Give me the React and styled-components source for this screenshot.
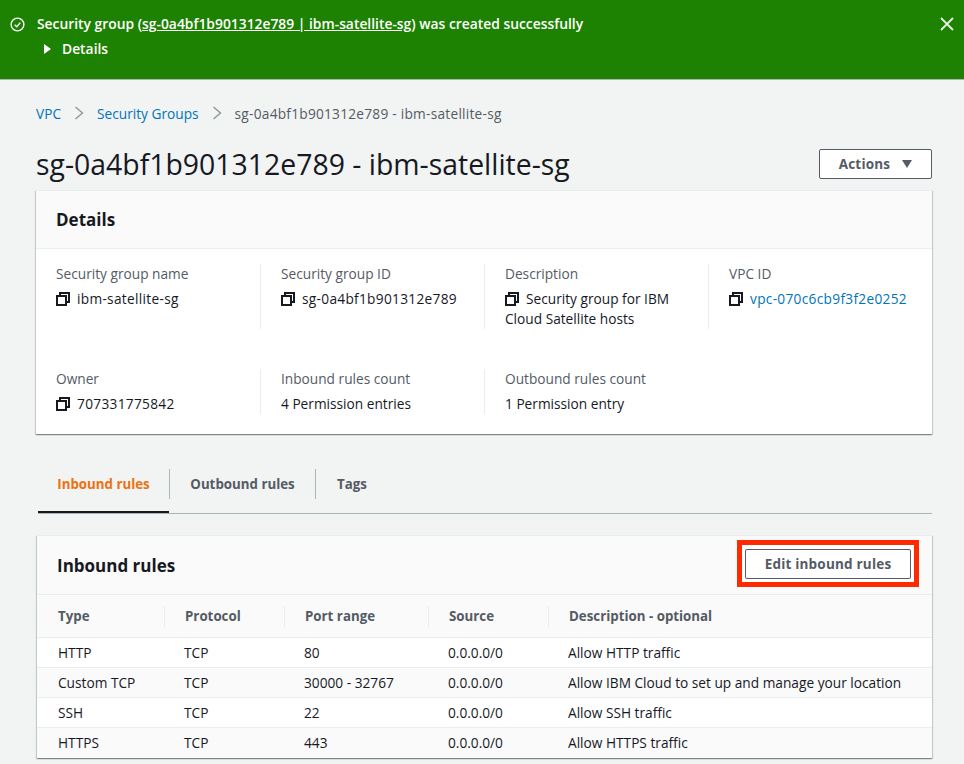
import React from 'react';
import styled, { createGlobalStyle } from 'styled-components';

const FONT = '"Open Sans", "Noto Sans", "Liberation Sans", sans-serif';

const GlobalStyle = createGlobalStyle`
  html, body {
    margin: 0;
    padding: 0;
    background: #f2f3f3;
    overflow: hidden;
  }
  body {
    font-family: ${FONT};
    font-size: 13.7px;
    color: #16191f;
  }
  * {
    box-sizing: border-box;
  }
`;

const Page = styled.div`
  width: 964px;
  height: 764px;
  overflow: hidden;
`;

const Banner = styled.div`
  height: 80px;
  background: #1d8102;
  border-bottom: 1px solid #aab7b8;
  padding: 15px 9px 0 10px;
  display: flex;
  align-items: flex-start;
  color: #fff;
`;

const BannerIcon = styled.svg`
  width: 15px;
  height: 15px;
  margin: 2px 12px 0 0;
  flex: none;
`;

const BannerBody = styled.div`
  flex: 1;
  font-weight: 600;
  font-size: 13.85px;
  line-height: 18px;
`;

const BannerLink = styled.span`
  text-decoration: underline;
`;

const DetailsToggle = styled.div`
  display: flex;
  align-items: center;
  margin-top: 7px;
  margin-left: 7px;
`;

const Caret = styled.span`
  width: 0;
  height: 0;
  border-top: 5px solid transparent;
  border-bottom: 5px solid transparent;
  border-left: 7px solid #fff;
  margin-right: 11px;
`;

const CloseIcon = styled.svg`
  width: 16px;
  height: 16px;
  margin-top: 1px;
  flex: none;
`;

const Content = styled.div`
  padding: 23px 32px 0 36px;
`;

const Breadcrumbs = styled.nav`
  height: 20px;
  display: flex;
  align-items: center;
  color: #545b64;
`;

const Crumb = styled.a`
  color: #0073bb;
`;

const CurrentCrumb = styled.span`
  letter-spacing: 0.25px;
`;

const CrumbSep = styled.svg`
  width: 10px;
  height: 14px;
  margin: 0 13px;
  flex: none;
`;

const TitleRow = styled.div`
  display: flex;
  align-items: center;
  justify-content: space-between;
  margin-top: 21px;
  height: 40px;
`;

const Title = styled.h1`
  margin: 0;
  font-size: 28.4px;
  font-weight: 400;
  color: #16191f;
`;

const Button = styled.button`
  font-family: ${FONT};
  font-size: 13.5px;
  font-weight: 700;
  letter-spacing: 0.2px;
  color: #545b64;
  background: #fff;
  border: 1px solid #545b64;
  border-radius: 2px;
  height: 30px;
  display: flex;
  align-items: center;
  justify-content: center;
  padding: 0;
  width: ${({ $width }) => $width}px;
`;

const ActionsCaret = styled.span`
  width: 0;
  height: 0;
  border-left: 5px solid transparent;
  border-right: 5px solid transparent;
  border-top: 8px solid #545b64;
  margin-left: 12px;
`;

const Card = styled.section`
  background: #fff;
  border-top: 1px solid #eaeded;
  box-shadow: 0 1px 1px 0 rgba(0, 28, 36, 0.3), 1px 1px 1px 0 rgba(0, 28, 36, 0.15),
    -1px 1px 1px 0 rgba(0, 28, 36, 0.15);
`;

const DetailsCard = styled(Card)`
  margin-top: 6px;
  height: 244px;
`;

const CardHeader = styled.header`
  background: #fafafa;
  border-bottom: 1px solid #eaeded;
  display: flex;
  align-items: center;
  justify-content: space-between;
  height: ${({ $height }) => $height}px;
  padding: ${({ $padding }) => $padding};
`;

const CardTitle = styled.h2`
  margin: 0;
  font-size: 17px;
  font-weight: 700;
  color: #16191f;
`;

const FieldGrid = styled.div`
  display: grid;
  grid-template-columns: 224px 224px 224px 224px;
  grid-template-rows: 65px 45px;
  row-gap: 40px;
  padding-top: 15px;
`;

const Field = styled.div`
  padding: 0 20px;
  border-left: ${({ $first }) => ($first ? 'none' : '1px solid #eaeded')};
`;

const FieldLabel = styled.div`
  line-height: 20px;
  color: #545b64;
`;

const FieldValue = styled.div`
  margin-top: 5px;
  line-height: 20px;
  white-space: ${({ $spaced }) => ($spaced ? 'nowrap' : 'normal')};
  letter-spacing: ${({ $spaced }) => ($spaced ? '0.3px' : '0')};
  color: ${({ $link }) => ($link ? '#0073bb' : '#16191f')};
`;

const CopyIcon = styled.svg`
  width: 14px;
  height: 14px;
  margin-right: 7px;
  vertical-align: -2px;
`;

const Tabs = styled.div`
  display: flex;
  align-items: flex-start;
  height: 46px;
  margin: 34px 0 0 2px;
  border-bottom: 1px solid #aab7b8;
`;

const Tab = styled.div`
  height: 100%;
  padding-bottom: 14px;
  display: flex;
  align-items: center;
  justify-content: center;
  font-size: 13.3px;
  font-weight: 700;
  width: ${({ $width }) => $width}px;
  color: ${({ $active }) => ($active ? '#ec7211' : '#545b64')};
  box-shadow: ${({ $active }) => ($active ? 'inset 0 -2px 0 #16191f' : 'none')};
`;

const TabSep = styled.span`
  width: 1px;
  height: 30px;
  background: #aab7b8;
  margin-top: 1px;
`;

const RulesCard = styled(Card)`
  margin: 21px 0 0 1px;
`;

const RedFrame = styled.div`
  border: 5px solid #ff2a00;
  padding: 4px 3px 3px;
  margin-bottom: 3px;
  background: #fff;
`;

const RulesTable = styled.div`
  display: grid;
  grid-template-columns: 127px 120px 144px 120px 1fr;
`;

const HeadCell = styled.div`
  height: 43px;
  background: #fafafa;
  border-bottom: 1px solid #eaeded;
  font-size: 13.3px;
  font-weight: 700;
  color: #545b64;
  display: flex;
  align-items: center;
`;

const HeadLabel = styled.span`
  flex: 1;
  height: 21px;
  line-height: 21px;
  padding-left: ${({ $indent }) => $indent}px;
  border-left: ${({ $first }) => ($first ? 'none' : '1px solid #eaeded')};
`;

const BodyCell = styled.div`
  height: 30px;
  line-height: 30px;
  white-space: nowrap;
  padding-left: ${({ $indent }) => $indent}px;
  background: ${({ $odd }) => ($odd ? '#fafafa' : '#fff')};
  border-bottom: ${({ $last }) => ($last ? 'none' : '1px solid #eaeded')};
`;

const Copy = () => (
  <CopyIcon viewBox="0 0 14 14" fill="none" stroke="#16191f" strokeWidth="2">
    <rect x="1" y="4" width="9" height="9" />
    <path d="M4 4V1h9v9h-3" />
  </CopyIcon>
);

const fields = [
  { label: 'Security group name', value: 'ibm-satellite-sg', copy: true, spaced: true },
  { label: 'Security group ID', value: 'sg-0a4bf1b901312e789', copy: true, spaced: true },
  { label: 'Description', value: 'Security group for IBM Cloud Satellite hosts', copy: true },
  { label: 'VPC ID', value: 'vpc-070c6cb9f3f2e0252', copy: true, link: true, spaced: true },
  { label: 'Owner', value: '707331775842', copy: true, spaced: true },
  { label: 'Inbound rules count', value: '4 Permission entries' },
  { label: 'Outbound rules count', value: '1 Permission entry' },
];

const columns = ['Type', 'Protocol', 'Port range', 'Source', 'Description - optional'];

const rows = [
  ['HTTP', 'TCP', '80', '0.0.0.0/0', 'Allow HTTP traffic'],
  ['Custom TCP', 'TCP', '30000 - 32767', '0.0.0.0/0', 'Allow IBM Cloud to set up and manage your location'],
  ['SSH', 'TCP', '22', '0.0.0.0/0', 'Allow SSH traffic'],
  ['HTTPS', 'TCP', '443', '0.0.0.0/0', 'Allow HTTPS traffic'],
];

export default function App() {
  return (
    <Page>
      <GlobalStyle />
      <Banner>
        <BannerIcon viewBox="0 0 16 16" fill="none" stroke="#fff" strokeWidth="1.5">
          <circle cx="8" cy="8" r="6.8" />
          <path d="M5 8.2l2.2 2.2L11 6" />
        </BannerIcon>
        <BannerBody>
          <div>
            Security group (<BannerLink>sg-0a4bf1b901312e789 | ibm-satellite-sg</BannerLink>) was created successfully
          </div>
          <DetailsToggle>
            <Caret />
            Details
          </DetailsToggle>
        </BannerBody>
        <CloseIcon viewBox="0 0 16 16" fill="none" stroke="#e6efe3" strokeWidth="1.8">
          <path d="M2 2l12 12M14 2L2 14" />
        </CloseIcon>
      </Banner>
      <Content>
        <Breadcrumbs>
          <Crumb>VPC</Crumb>
          <CrumbSep viewBox="0 0 10 14" fill="none" stroke="#879596" strokeWidth="1.3">
            <path d="M1.5 1l7 6-7 6" />
          </CrumbSep>
          <Crumb>Security Groups</Crumb>
          <CrumbSep viewBox="0 0 10 14" fill="none" stroke="#879596" strokeWidth="1.3">
            <path d="M1.5 1l7 6-7 6" />
          </CrumbSep>
          <CurrentCrumb>sg-0a4bf1b901312e789 - ibm-satellite-sg</CurrentCrumb>
        </Breadcrumbs>
        <TitleRow>
          <Title>sg-0a4bf1b901312e789 - ibm-satellite-sg</Title>
          <Button $width={113}>
            Actions
            <ActionsCaret />
          </Button>
        </TitleRow>
        <DetailsCard>
          <CardHeader $height={58} $padding="0 20px">
            <CardTitle>Details</CardTitle>
          </CardHeader>
          <FieldGrid>
            {fields.map((f, i) => (
              <Field key={f.label} $first={i % 4 === 0}>
                <FieldLabel>{f.label}</FieldLabel>
                <FieldValue $link={f.link} $spaced={f.spaced}>
                  {f.copy && <Copy />}
                  {f.value}
                </FieldValue>
              </Field>
            ))}
          </FieldGrid>
        </DetailsCard>
        <Tabs>
          <Tab $active $width={131}>Inbound rules</Tab>
          <TabSep />
          <Tab $width={145}>Outbound rules</Tab>
          <TabSep />
          <Tab $width={72}>Tags</Tab>
        </Tabs>
        <RulesCard>
          <CardHeader $height={59} $padding="0 13px 0 20px">
            <CardTitle>Inbound rules</CardTitle>
            <RedFrame>
              <Button $width={166}>Edit inbound rules</Button>
            </RedFrame>
          </CardHeader>
          <RulesTable>
            {columns.map((c, i) => (
              <HeadCell key={c}>
                <HeadLabel $first={i === 0} $indent={i === 0 ? 21 : 20}>{c}</HeadLabel>
              </HeadCell>
            ))}
            {rows.map((row, r) =>
              row.map((cell, c) => (
                <BodyCell key={`${r}-${c}`} $odd={r % 2 === 1} $last={r === rows.length - 1} $indent={c === 0 ? 21 : 20}>
                  {cell}
                </BodyCell>
              )),
            )}
          </RulesTable>
        </RulesCard>
      </Content>
    </Page>
  );
}
